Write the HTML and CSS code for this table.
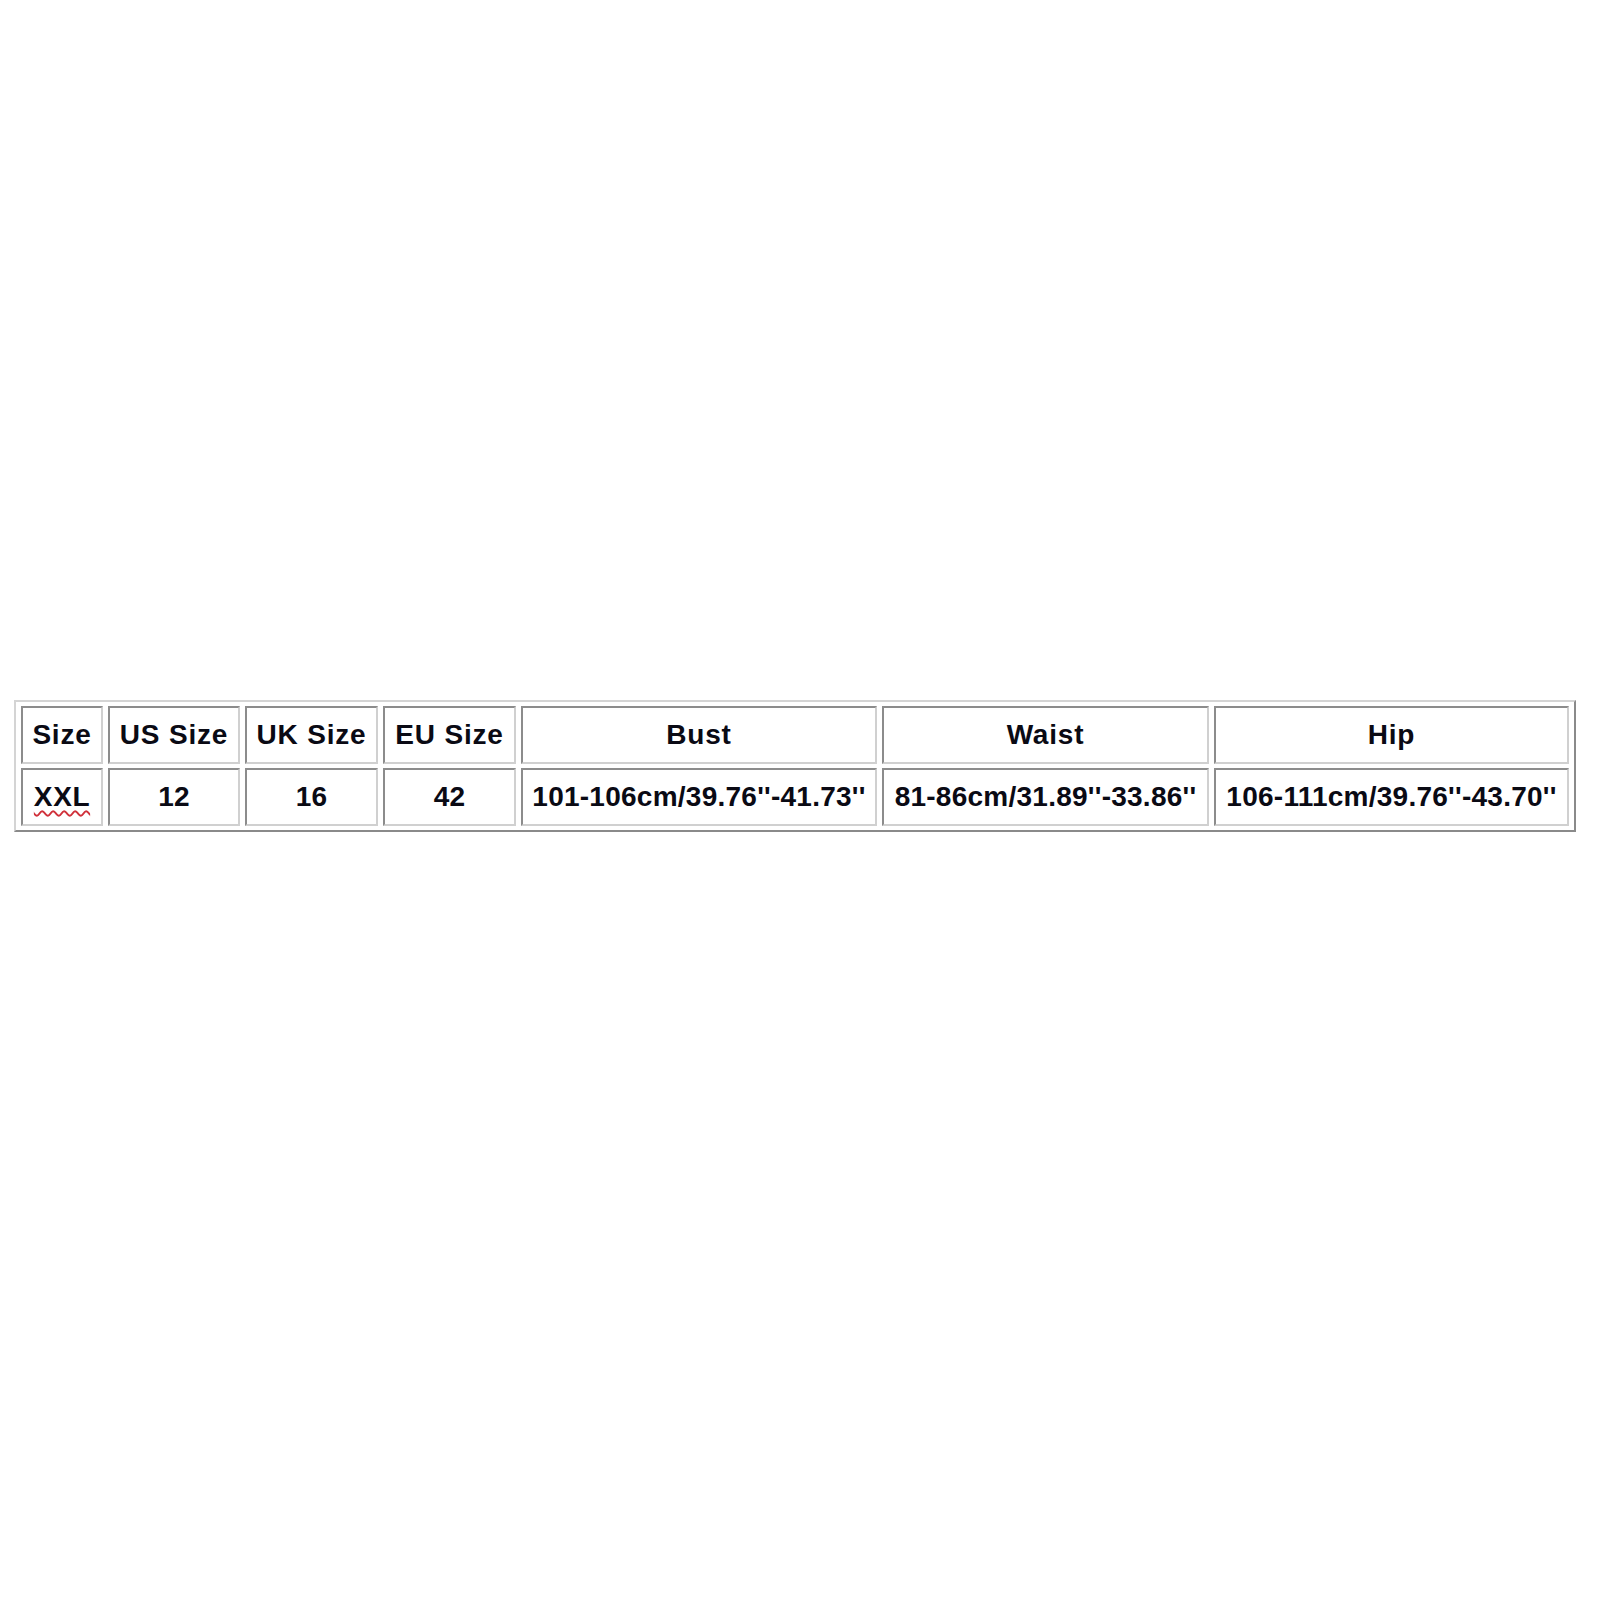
FILE: index.html
```html
<!DOCTYPE html>
<html>
<head>
<meta charset="utf-8">
<link rel="stylesheet" href="styles.css">
</head>
<body>
<div class="page">
  <table class="size-table">
    <colgroup>
      <col class="c-size">
      <col class="c-us">
      <col class="c-uk">
      <col class="c-eu">
      <col class="c-bust">
      <col class="c-waist">
      <col class="c-hip">
    </colgroup>
    <tr class="head-row">
      <td>Size</td>
      <td>US Size</td>
      <td>UK Size</td>
      <td>EU Size</td>
      <td>Bust</td>
      <td>Waist</td>
      <td>Hip</td>
    </tr>
    <tr class="data-row">
      <td><span class="spell">XXL</span></td>
      <td>12</td>
      <td>16</td>
      <td>42</td>
      <td>101-106cm/39.76''-41.73''</td>
      <td>81-86cm/31.89''-33.86''</td>
      <td>106-111cm/39.76''-43.70''</td>
    </tr>
  </table>
</div>
</body>
</html>
```
FILE: styles.css
```css
html, body {
  margin: 0;
  padding: 0;
  background: #ffffff;
}

.page {
  padding: 700px 0 0 14px;
}

.size-table {
  table-layout: fixed;
  width: 1562px;
  border-collapse: separate;
  border-spacing: 5px 4px;
  border-style: solid;
  border-width: 2px;
  border-color: #d4d4d4 #8a8a8a #8a8a8a #d4d4d4;
  font-family: "Liberation Sans", Arial, sans-serif;
  font-weight: bold;
  font-size: 28px;
  color: #0a0a14;
}

.size-table td {
  height: 58px;
  box-sizing: border-box;
  padding: 0;
  text-align: center;
  vertical-align: middle;
  white-space: nowrap;
  border-style: solid;
  border-width: 2px;
  border-color: #8c8c8c #d0d0d0 #d0d0d0 #8c8c8c;
}

.head-row td {
  letter-spacing: 0.8px;
}

.data-row td {
  letter-spacing: 0.25px;
}

.c-size { width: 82px; }
.c-us { width: 132px; }
.c-uk { width: 133px; }
.c-eu { width: 133px; }
.c-bust { width: 356px; }
.c-waist { width: 327px; }
.c-hip { width: 355px; }

.spell {
  letter-spacing: 0.6px;
  text-decoration-line: underline;
  text-decoration-style: wavy;
  text-decoration-color: #d0303a;
  text-decoration-thickness: 1.5px;
  text-underline-offset: 4px;
}
```
